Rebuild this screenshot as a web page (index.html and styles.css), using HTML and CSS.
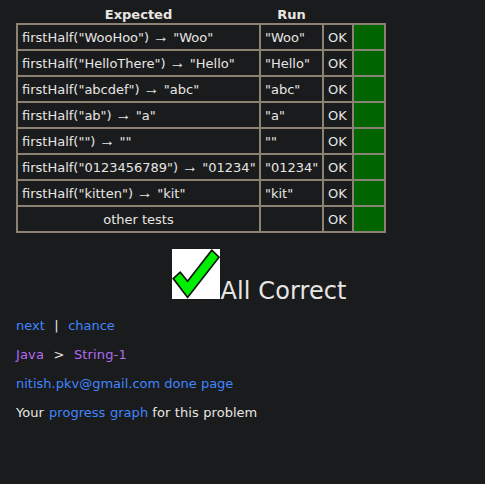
FILE: index.html
```html
<!DOCTYPE html>
<html lang="en">
<head>
<meta charset="utf-8">
<title>firstHalf</title>
<link rel="stylesheet" href="styles.css">
</head>
<body>
<div class="results">
<table class="tests">
<colgroup><col class="c-expected"><col class="c-run"><col class="c-status"><col class="c-color"></colgroup>
<thead><tr><th>Expected</th><th>Run</th><th></th><th></th></tr></thead>
<tbody>
<tr><td>firstHalf("WooHoo") <span class="arrow">→</span> "Woo"</td><td>"Woo"</td><td>OK</td><td class="pass"></td></tr>
<tr><td>firstHalf("HelloThere") <span class="arrow">→</span> "Hello"</td><td>"Hello"</td><td>OK</td><td class="pass"></td></tr>
<tr><td>firstHalf("abcdef") <span class="arrow">→</span> "abc"</td><td>"abc"</td><td>OK</td><td class="pass"></td></tr>
<tr><td>firstHalf("ab") <span class="arrow">→</span> "a"</td><td>"a"</td><td>OK</td><td class="pass"></td></tr>
<tr><td>firstHalf("") <span class="arrow">→</span> ""</td><td>""</td><td>OK</td><td class="pass"></td></tr>
<tr><td>firstHalf("0123456789") <span class="arrow">→</span> "01234"</td><td>"01234"</td><td>OK</td><td class="pass"></td></tr>
<tr><td>firstHalf("kitten") <span class="arrow">→</span> "kit"</td><td>"kit"</td><td>OK</td><td class="pass"></td></tr>
<tr><td class="other">other tests</td><td></td><td>OK</td><td class="pass"></td></tr>
</tbody>
</table>
<div class="summary">
<svg class="check" width="48" height="50" viewBox="0 0 48 50"><rect width="48" height="50" fill="#fff"/><path d="M1.2 29.6 8.2 23.2 15.6 32.2 39.8 1.2 47 8.2 15.6 48.4Z" fill="#00ee00" stroke="#0a140a" stroke-width="1.7"/></svg><span class="verdict">All Correct</span>
</div>
</div>
<p class="nav"><a href="#">next</a> &nbsp;|&nbsp; <a href="#">chance</a></p>
<p class="crumbs"><a class="visited" href="#">Java</a> &nbsp;&gt;&nbsp; <a class="visited" href="#">String-1</a></p>
<p class="done"><a href="#">nitish.pkv@gmail.com done page</a></p>
<p class="graph">Your <a href="#">progress graph</a> for this problem</p>
</body>
</html>
```
FILE: styles.css
```css
body {
  margin: 0;
  padding: 6px 16px 0;
  background: #1a1b1d;
  color: #e8e6e3;
  font: 13px/16px "DejaVu Sans", Verdana, sans-serif;
}
.results { width: 370px; }
.tests {
  width: 370px;
  table-layout: fixed;
  border-collapse: collapse;
}
.c-expected { width: 243px; }
.c-run { width: 63px; }
.c-status { width: 30px; }
.c-color { width: 32px; }
th { height: 17px; padding: 0; line-height: 17px; vertical-align: top; }
td {
  box-sizing: border-box;
  height: 26px;
  padding: 4px 0 2px 4px;
  border: 2px solid #8c8273;
  white-space: nowrap;
}
.arrow {
  margin: 0 0.2px 0 -0.3px;
  font-family: "Liberation Sans", Arial, sans-serif;
  font-size: 16px;
  line-height: 1px;
}
.other { padding-left: 0; text-align: center; }
.pass { background: #006400; }
.summary {
  display: flex;
  align-items: flex-end;
  height: 50px;
  margin: 16px 0 19px;
  padding-left: 156px;
}
.check { display: block; flex: none; }
.verdict {
  margin: 0 0 -6px 0.5px;
  font-size: 24px;
  line-height: 28px;
  letter-spacing: 0.1px;
  white-space: nowrap;
}
p { margin: 0 0 13px; white-space: nowrap; }
a { color: #4086ff; text-decoration: none; }
.visited { color: #b06cf0; }
.nav { word-spacing: 0.6px; }
.crumbs { letter-spacing: 0.14px; word-spacing: 0.45px; }
.graph { letter-spacing: 0.03px; word-spacing: 0.4px; }
.graph a { margin-left: 0.6px; margin-right: -0.4px; }
```
